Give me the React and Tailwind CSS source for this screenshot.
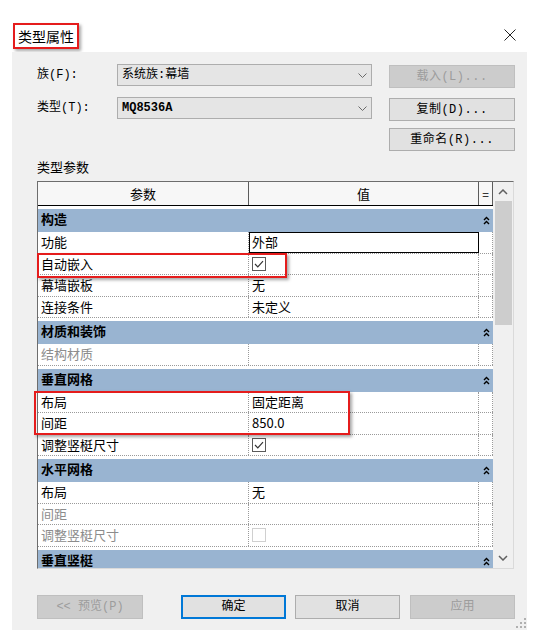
import React from "react";

const sections = [
    {
        title: "构造",
        rows: [
            { name: "功能", value: "外部", edit: true },
            { name: "自动嵌入", check: "on" },
            { name: "幕墙嵌板", value: "无" },
            { name: "连接条件", value: "未定义" },
        ],
    },
    { title: "材质和装饰", rows: [{ name: "结构材质", disabled: true }] },
    {
        title: "垂直网格",
        rows: [
            { name: "布局", value: "固定距离" },
            { name: "间距", value: "850.0" },
            { name: "调整竖梃尺寸", check: "on" },
        ],
    },
    {
        title: "水平网格",
        rows: [
            { name: "布局", value: "无" },
            { name: "间距", disabled: true },
            { name: "调整竖梃尺寸", disabled: true, check: "off" },
        ],
    },
    { title: "垂直竖梃", rows: [] },
];

const mono = "font-['Liberation_Mono','Noto_Sans_CJK_SC',monospace]";

function CheckBox({ on }) {
    return (
        <svg width="14" height="14" viewBox="0 0 14 14">
            <rect x="0.5" y="0.5" width="13" height="13" fill="#fff" stroke={on ? "#5a5a5a" : "#d0d0d0"} />
            {on && <path d="M3 7 L5.8 9.8 L11 4.2" stroke="#333" strokeWidth="1.2" fill="none" />}
        </svg>
    );
}

function DoubleCaret() {
    return (
        <svg width="7" height="9" viewBox="0 0 7 9">
            <path d="M1 4 L3.5 1.5 L6 4 M1 8 L3.5 5.5 L6 8" stroke="#000" strokeWidth="1.4" fill="none" />
        </svg>
    );
}

function Select({ children }) {
    return (
        <div className="w-[255px] h-[22px] self-start flex items-center justify-between pl-[4px] pr-[4px] bg-[#e5e5e5] border border-[#adadad]">
            <span className="text-[12px] leading-[20px] text-black">{children}</span>
            <svg width="9" height="5" viewBox="0 0 9 5">
                <path d="M0.5 0.5 L4.5 4.5 L8.5 0.5" stroke="#6a6a6a" fill="none" />
            </svg>
        </div>
    );
}

function Btn({ children, disabled, primary, className = "" }) {
    return (
        <div
            className={`flex items-center justify-center text-[12px] ${className} ${disabled
                ? "bg-[#cccccc] border border-[#bfbfbf] text-[#9c9c9c]"
                : primary
                    ? "bg-[#e1e1e1] border-2 border-[#0078d7] text-black"
                    : "bg-[#e1e1e1] border border-[#adadad] text-black"
                }`}
        >
            {children}
        </div>
    );
}

function Row({ row }) {
    const txt = row.disabled ? "text-[#8c8c8c]" : "text-black";
    return (
        <div className="flex h-[21.5px] bg-white border-b border-dotted border-[#9a9a9a]">
            <div className={`w-[211px] pl-[3px] text-[13px] leading-[20px] ${txt} border-r border-dotted border-[#9a9a9a]`}>
                {row.name}
            </div>
            {row.edit ? (
                <div className="w-[230px] pl-[2px] text-[13px] leading-[18px] text-black border border-black">
                    {row.value}
                </div>
            ) : (
                <div className="w-[230px] pl-[3px] flex items-center text-[13px] leading-[20px] text-black border-r border-dotted border-[#9a9a9a]">
                    {row.check ? <CheckBox on={row.check === "on"} /> : row.value}
                </div>
            )}
            <div className="w-[14px] border-r border-dotted border-[#9a9a9a]" />
        </div>
    );
}

function Section({ s }) {
    return (
        <div className="flex flex-col">
            <div className="mt-[3px] h-[23px] shrink-0 flex items-start justify-between pt-[3px] bg-[#99b4d1]">
                <span className="pl-[3px] text-[13px] leading-[14px] font-bold text-black">{s.title}</span>
                <span className="w-[14px] h-[17px] flex items-center justify-center">
                    <DoubleCaret />
                </span>
            </div>
            {s.rows.map((r, i) => (
                <Row key={i} row={r} />
            ))}
        </div>
    );
}

export default function App() {
    return (
        <div className="w-[534px] h-[639px] bg-white overflow-hidden font-['Noto_Sans_CJK_SC','Liberation_Sans',sans-serif]">
            {/* title bar */}
            <div className="h-[52px] flex items-start justify-between pr-[18px]">
                <div className="ml-[13px] mt-[23px] h-[26px] px-[3px] flex items-center border-2 border-[#e51c1c] shadow-[2px_2px_3px_rgba(0,0,0,0.35)]">
                    <span className="text-[14px] leading-[20px] text-black">类型属性</span>
                </div>
                <svg className="mt-[29px]" width="12" height="12" viewBox="0 0 12 12">
                    <path d="M0.5 0.5 L11.5 11.5 M11.5 0.5 L0.5 11.5" stroke="#222" strokeWidth="1" />
                </svg>
            </div>

            {/* dialog body */}
            <div className="relative ml-[12px] w-[515px] h-[578px] bg-[#f0f0f0] pl-[25px] flex flex-col">
                <div className={`mt-[12px] h-[24px] flex ${mono}`}>
                    <div className="w-[80px] text-[12px] leading-[22px] text-black">族(F):</div>
                    <Select>系统族:幕墙</Select>
                    <Btn disabled className="ml-[17px] w-[126px] h-[23px] self-end tracking-[0.5px]">载入(L)...</Btn>
                </div>
                <div className={`mt-[9px] h-[24px] flex ${mono}`}>
                    <div className="w-[80px] text-[12px] leading-[22px] text-black">类型(T):</div>
                    <Select>
                        <span className="font-bold">MQ8536A</span>
                    </Select>
                    <Btn className="ml-[17px] w-[126px] h-[23px] self-end tracking-[0.5px]">复制(D)...</Btn>
                </div>
                <div className={`mt-[7px] flex ${mono}`}>
                    <Btn className="ml-[352px] w-[126px] h-[23px] tracking-[0.5px]">重命名(R)...</Btn>
                </div>

                <div className="mt-[8px] text-[13px] leading-[16px] text-black">类型参数</div>

                {/* parameter table */}
                <div className="relative mt-[6px] w-[477px] h-[388px] flex border-t border-l border-[#6d6d6d] border-r border-b border-r-[#dadada] border-b-[#dadada]">
                    <div className="w-[455px] h-full flex flex-col bg-white overflow-hidden">
                        <div className="h-[24px] shrink-0 flex bg-[#f7f7f7] border-b border-black text-[13px] text-black">
                            <div className="w-[211px] flex items-center justify-center border-r border-[#5c5c5c]">参数</div>
                            <div className="w-[230px] flex items-center justify-center border-r border-[#5c5c5c]">值</div>
                            <div className="w-[14px] flex items-center justify-center text-[12px] border-r border-[#5c5c5c]">=</div>
                        </div>
                        {sections.map((s, i) => (
                            <Section key={i} s={s} />
                        ))}
                    </div>
                    {/* scrollbar */}
                    <div className="w-[20px] h-full flex flex-col items-center bg-[#f0f0f0]">
                        <div className="h-[19px] flex items-center justify-center">
                            <svg width="10" height="6" viewBox="0 0 10 6">
                                <path d="M1 5 L5 1 L9 5" stroke="#606060" strokeWidth="1.5" fill="none" />
                            </svg>
                        </div>
                        <div className="w-[17px] h-[124px] bg-[#cdcdcd]" />
                        <div className="flex-1" />
                        <div className="h-[20px] flex items-center justify-center">
                            <svg width="10" height="6" viewBox="0 0 10 6">
                                <path d="M1 1 L5 5 L9 1" stroke="#606060" strokeWidth="1.5" fill="none" />
                            </svg>
                        </div>
                    </div>

                    {/* annotation boxes */}
                    <div className="absolute left-[-1px] top-[71px] w-[250px] h-[25px] border-2 border-[#e51c1c] shadow-[2px_2px_3px_rgba(0,0,0,0.35)]" />
                    <div className="absolute left-[-4px] top-[209px] w-[316px] h-[44px] border-2 border-[#e51c1c] shadow-[2px_2px_3px_rgba(0,0,0,0.35)]" />
                </div>

                {/* bottom buttons */}
                <div className={`mt-[26px] flex ${mono}`}>
                    <Btn disabled className="w-[106px] h-[24px]">&lt;&lt; 预览(P)</Btn>
                    <Btn primary className="ml-[38px] w-[105px] h-[24px]">确定</Btn>
                    <Btn className="ml-[9px] w-[105px] h-[24px]">取消</Btn>
                    <Btn disabled className="ml-[10px] w-[105px] h-[24px]">应用</Btn>
                </div>

                {/* size grip */}
                <svg className="absolute right-[1px] bottom-[2px]" width="10" height="10" viewBox="0 0 10 10">
                    <rect x="8" y="0" width="2" height="2" fill="#b0b0b0" />
                    <rect x="4" y="4" width="2" height="2" fill="#b0b0b0" />
                    <rect x="8" y="4" width="2" height="2" fill="#b0b0b0" />
                    <rect x="0" y="8" width="2" height="2" fill="#b0b0b0" />
                    <rect x="4" y="8" width="2" height="2" fill="#b0b0b0" />
                    <rect x="8" y="8" width="2" height="2" fill="#b0b0b0" />
                </svg>
            </div>
        </div>
    );
}
